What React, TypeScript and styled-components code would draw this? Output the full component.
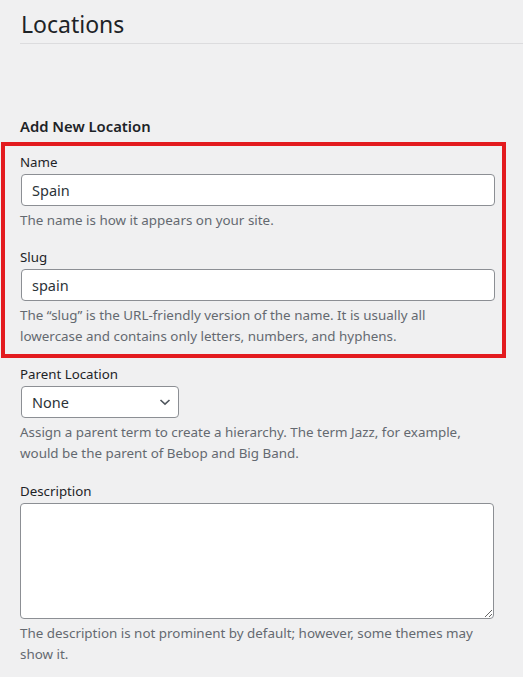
import styled, { createGlobalStyle } from "styled-components";

const GlobalStyle = createGlobalStyle`
  html, body {
    margin: 0;
    padding: 0;
    background: #f0f0f1;
  }
  body {
    font-family: "Noto Sans", "Open Sans", sans-serif;
    color: #1d2327;
  }
`;

const Page = styled.div`
  padding: 9px 0 0 20px;
`;

const PageTitle = styled.h1`
  margin: 0;
  padding: 0 0 4px 1px;
  font-size: 23px;
  font-weight: 400;
  line-height: 30px;
  color: #1d2327;
  border-bottom: 1px solid #dcdcde;
`;

const FormCol = styled.div`
  width: 475px;
  padding-top: 72px;
`;

const FormTitle = styled.h2`
  margin: 0 0 6px;
  font-size: 14.8px;
  font-weight: 600;
  line-height: 20px;
`;

// red outline around the name + slug fields
const Highlight = styled.div`
  margin: 0 -11px 0 -19px;
  padding: 6px 7px 7px 15px;
  border: 4px solid #e31b1f;
`;

const Field = styled.div<{ $gap?: number }>`
  margin-top: ${(p) => p.$gap ?? 0}px;
`;

const Label = styled.label`
  display: block;
  font-size: 13.3px;
  line-height: 20px;
  margin-bottom: 2px;
`;

const TextInput = styled.input`
  box-sizing: border-box;
  display: block;
  width: 474px;
  height: 32px;
  margin: 0 0 0 1px;
  padding: 0 10px;
  font-family: inherit;
  font-size: 14.5px;
  color: #2c3338;
  background: #fff;
  border: 1px solid #8c8f94;
  border-radius: 4px;
  outline: none;
`;

const SelectWrap = styled.div`
  position: relative;
  width: 158px;
  margin-left: 1px;
`;

const Select = styled.select`
  box-sizing: border-box;
  display: block;
  width: 100%;
  height: 32px;
  padding: 0 24px 0 10px;
  font-family: inherit;
  font-size: 14.5px;
  color: #2c3338;
  background: #fff;
  border: 1px solid #8c8f94;
  border-radius: 4px;
  appearance: none;
  outline: none;
`;

const Chevron = styled.svg`
  position: absolute;
  right: 8px;
  top: 11px;
  pointer-events: none;
`;

const TextArea = styled.textarea`
  box-sizing: border-box;
  display: block;
  width: 474px;
  height: 116px;
  margin: 0 0 4px;
  padding: 6px 8px;
  font-family: inherit;
  font-size: 14px;
  background: #fff;
  border: 1px solid #8c8f94;
  border-radius: 4px;
  outline: none;
`;

const Help = styled.p`
  max-width: 462px;
  margin: 4px 0 0;
  font-size: 13.4px;
  line-height: 21px;
  color: #646970;
`;

function App() {
  return (
    <>
      <GlobalStyle />
      <Page>
        <PageTitle>Locations</PageTitle>
        <FormCol>
          <FormTitle>Add New Location</FormTitle>
          <Highlight>
            <Field>
              <Label htmlFor="tag-name">Name</Label>
              <TextInput id="tag-name" defaultValue="Spain" />
              <Help>The name is how it appears on your site.</Help>
            </Field>
            <Field $gap={16}>
              <Label htmlFor="tag-slug">Slug</Label>
              <TextInput id="tag-slug" defaultValue="spain" />
              <Help>
                The “slug” is the URL-friendly version of the name. It is usually all lowercase and
                contains only letters, numbers, and hyphens.
              </Help>
            </Field>
          </Highlight>
          <Field $gap={6}>
            <Label htmlFor="parent">Parent Location</Label>
            <SelectWrap>
              <Select id="parent" defaultValue="-1">
                <option value="-1">None</option>
              </Select>
              <Chevron width="12" height="10" viewBox="0 0 12 10">
                <path d="M1.5 3 L6 7.2 L10.5 3" fill="none" stroke="#50575e" strokeWidth="1.6" />
              </Chevron>
            </SelectWrap>
            <Help>
              Assign a parent term to create a hierarchy. The term Jazz, for example, would be the
              parent of Bebop and Big Band.
            </Help>
          </Field>
          <Field $gap={17}>
            <Label htmlFor="tag-description">Description</Label>
            <TextArea id="tag-description" />
            <Help>The description is not prominent by default; however, some themes may show it.</Help>
          </Field>
        </FormCol>
      </Page>
    </>
  );
}

export default App;
